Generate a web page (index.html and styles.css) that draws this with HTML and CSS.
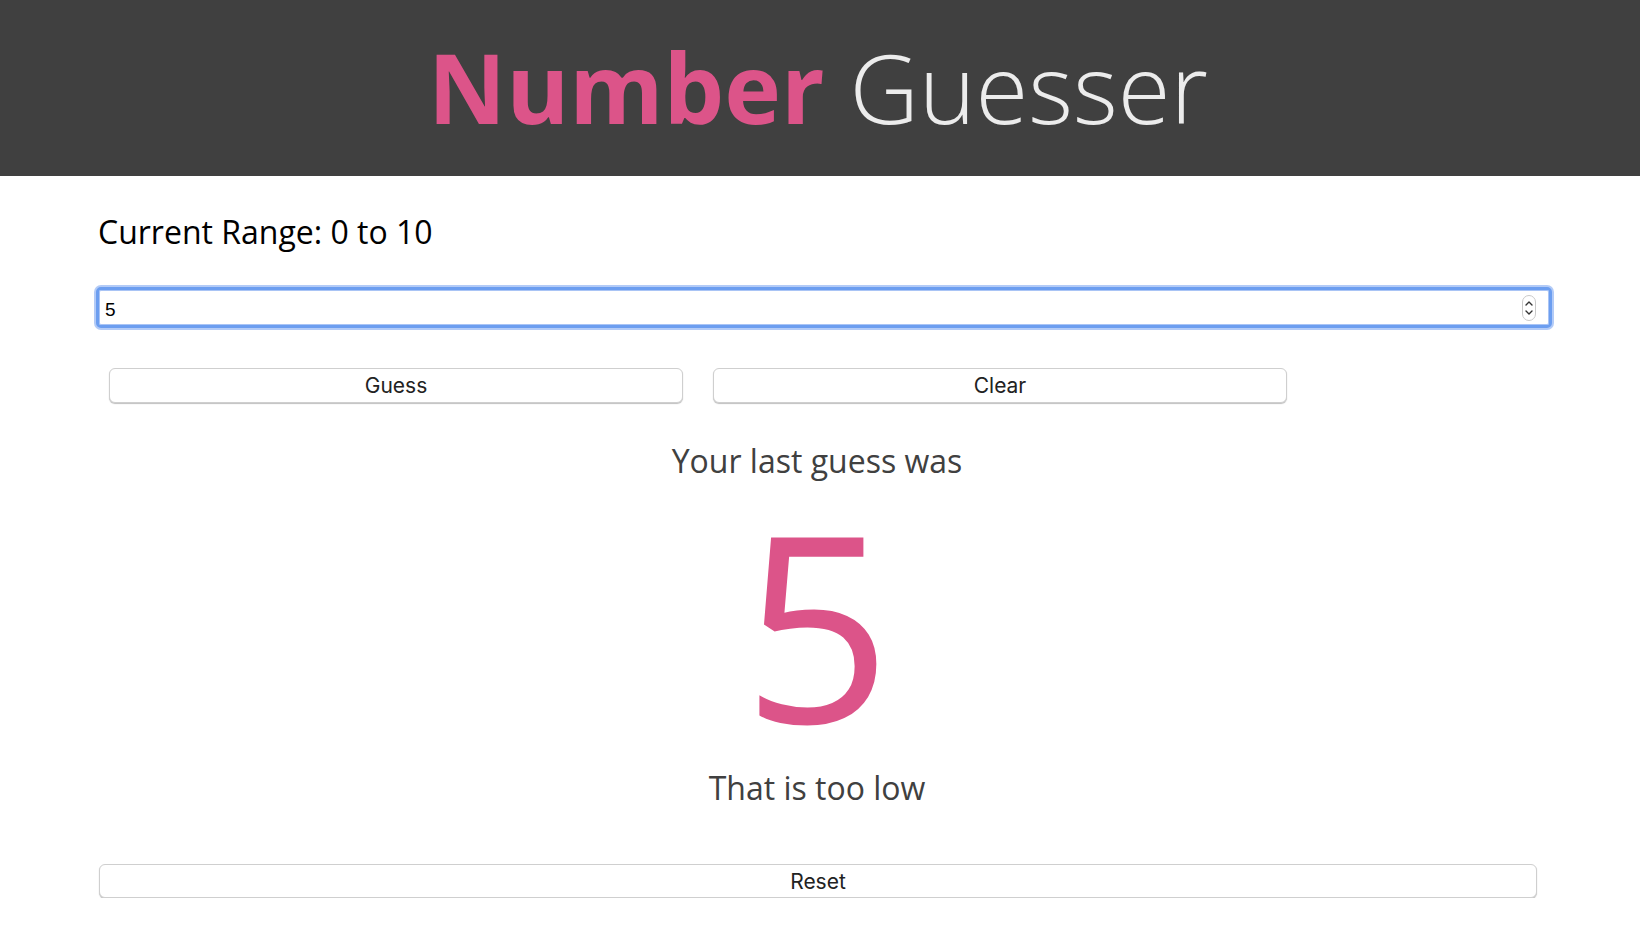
FILE: index.html
```html
<!DOCTYPE html>
<html lang="en">
<head>
<meta charset="utf-8">
<title>Number Guesser</title>
<link rel="stylesheet" href="styles.css">
</head>
<body>
<header class="header">
  <h1 class="title"><span class="title-bold">Number</span> <span class="title-light">Guesser</span></h1>
</header>
<main class="main">
  <div class="controls">
    <h2 class="range">Current Range: 0 to 10</h2>
    <div class="input-wrap">
      <span class="input-value">5</span>
      <span class="spinner">
        <svg width="14" height="26" viewBox="0 0 14 26" aria-hidden="true">
          <rect x="0.5" y="0.5" width="13" height="25" rx="6.5" fill="#fff" stroke="#c9c9c9"/>
          <path d="M4 10 L7 7 L10 10" fill="none" stroke="#333" stroke-width="1.4" stroke-linecap="round" stroke-linejoin="round"/>
          <path d="M4 16 L7 19 L10 16" fill="none" stroke="#333" stroke-width="1.4" stroke-linecap="round" stroke-linejoin="round"/>
        </svg>
      </span>
    </div>
    <div class="btn-row">
      <button class="btn btn-half">Guess</button>
      <button class="btn btn-half">Clear</button>
    </div>
  </div>
  <div class="result">
    <p class="last">Your last guess was</p>
    <p class="number">5</p>
    <p class="hint">That is too low</p>
  </div>
  <div class="controls">
    <button class="btn btn-reset">Reset</button>
  </div>
</main>
</body>
</html>
```
FILE: styles.css
```css
* { box-sizing: border-box; }
html, body { margin: 0; padding: 0; background: #fff; }
body { font-family: "Open Sans", "Noto Sans", sans-serif; }

.header {
  background: #404040;
  height: 176px;
  padding-top: 39px;
}
.title {
  margin: 0;
  text-align: center;
  font-size: 96px;
  line-height: 96px;
  font-weight: 400;
  padding-right: 4px;
}
.title-bold { color: #dc5489; font-weight: 700; }
.title-light { color: #ececec; font-weight: 300; }

.controls {
  padding-left: 98px;
}
.range {
  margin: 36px 0 0 0;
  font-size: 32px;
  line-height: 40px;
  font-weight: 400;
  color: #000;
}

.input-wrap {
  margin-top: 35px;
  margin-left: -2px;
  width: 1456px;
  height: 41px;
  border: 3px solid #6c9ef0;
  border-radius: 5px;
  box-shadow: 0 0 0 2px #b3cbf7, inset 0 0 0 1px #a9c4f5;
  display: flex;
  align-items: center;
  justify-content: space-between;
  padding: 0 13px 0 6px;
  background: #fff;
}
.input-value {
  font-family: "Liberation Sans", Arial, sans-serif;
  font-size: 19px;
  color: #000;
  line-height: 1;
  padding-top: 3px;
}
.spinner { display: flex; }

.btn {
  font-family: Inter, "Liberation Sans", sans-serif;
  font-size: 21px;
  color: #222;
  background: #fff;
  border: 1px solid #cfcfcf;
  border-radius: 6px;
  box-shadow: 0 1px 1px rgba(0,0,0,0.25);
  height: 35px;
  padding: 0;
  cursor: pointer;
}
.btn-row {
  display: flex;
  gap: 30px;
  margin-top: 40px;
  padding-left: 11px;
}
.btn-half { width: 574px; }

.result {
  display: flex;
  flex-direction: column;
  align-items: center;
  padding-right: 6px;
}
.last, .hint {
  margin: 0;
  font-size: 32px;
  line-height: 40px;
  color: #404040;
}
.last { margin-top: 38px; }
.number {
  margin: 11px 0 0 0;
  font-size: 260px;
  line-height: 260px;
  font-weight: 400;
  color: #dc5489;
}
.hint { margin-top: 16px; }
.btn-reset {
  display: block;
  margin-top: 56px;
  margin-left: 1px;
  width: 1438px;
  height: 34px;
}
```
